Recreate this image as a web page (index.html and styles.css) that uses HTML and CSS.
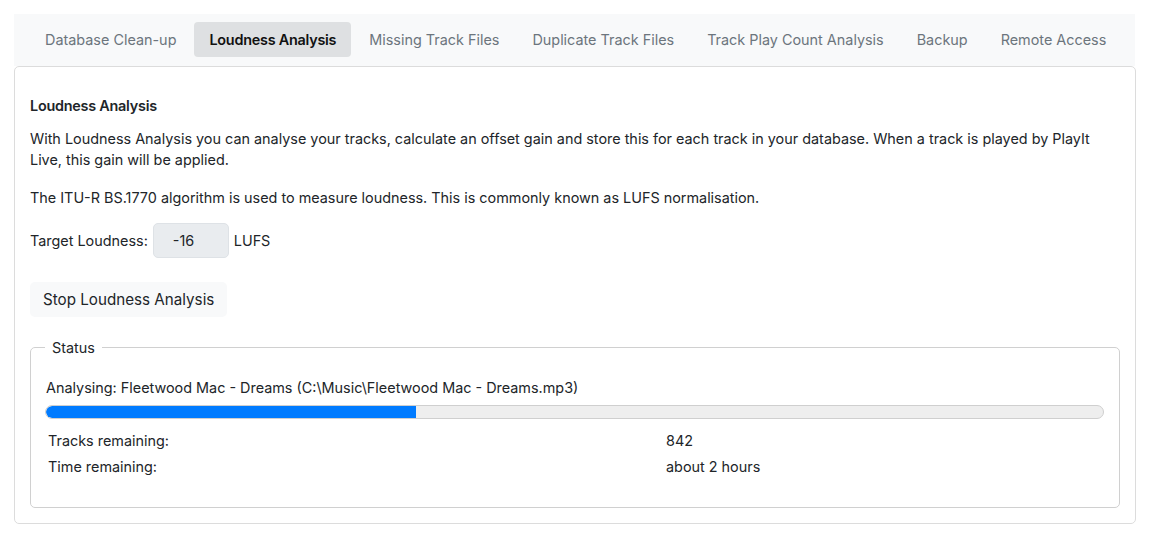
FILE: index.html
```html
<!DOCTYPE html>
<html lang="en">
<head>
<meta charset="utf-8">
<title>Loudness Analysis</title>
<link rel="stylesheet" href="styles.css">
</head>
<body>
<div class="page">
  <nav class="tabs">
    <a class="tab">Database Clean-up</a>
    <a class="tab active">Loudness Analysis</a>
    <a class="tab">Missing Track Files</a>
    <a class="tab">Duplicate Track Files</a>
    <a class="tab">Track Play Count Analysis</a>
    <a class="tab">Backup</a>
    <a class="tab">Remote Access</a>
  </nav>
  <section class="panel">
    <h2 class="title">Loudness Analysis</h2>
    <p class="text">With Loudness Analysis you can analyse your tracks, calculate an offset gain and store this for each track in your database. When a track is played by PlayIt Live, this gain will be applied.</p>
    <p class="text">The ITU-R BS.1770 algorithm is used to measure loudness. This is commonly known as LUFS normalisation.</p>
    <div class="target">
      <span>Target Loudness:</span>
      <input class="num" type="text" value="-16" disabled>
      <span>LUFS</span>
    </div>
    <button class="btn" type="button">Stop Loudness Analysis</button>
    <fieldset class="status">
      <legend class="legend">Status</legend>
      <div class="current">Analysing: Fleetwood Mac - Dreams (C:\Music\Fleetwood Mac - Dreams.mp3)</div>
      <div class="progress"><div class="bar" style="width:35%"></div></div>
      <div class="stats">
        <span>Tracks remaining:</span><span>842</span>
        <span>Time remaining:</span><span>about 2 hours</span>
      </div>
    </fieldset>
  </section>
</div>
</body>
</html>
```

FILE: styles.css
```css
* { box-sizing: border-box; }
html, body { margin: 0; padding: 0; background: #fff; }
body {
  font-family: Inter, "Noto Sans", "Liberation Sans", sans-serif;
  font-size: 14.4px;
  line-height: 21px;
  color: #212529;
}
.page { padding: 14px 14px 0 14px; }
.tabs {
  display: flex;
  gap: 3px;
  background: #f8f9fa;
  padding: 8px 16px 9px 16px;
  margin-right: 1px;
}
.tab {
  padding: 7px 15px;
  color: #6c757d;
  border-radius: 4px;
  white-space: nowrap;
  cursor: pointer;
}
.tab.active {
  background: #dee0e2;
  color: #111;
  font-weight: 600;
  letter-spacing: -0.24px;
}
.panel {
  border: 1px solid #dcdcdc;
  border-radius: 5px;
  padding: 28px 15px 15px 15px;
}
.title {
  margin: 0 0 12px 0;
  font-size: 14.4px;
  line-height: 21px;
  font-weight: 600;
  letter-spacing: -0.24px;
}
.text { margin: 0 0 17px 0; }
.text + .text { margin-bottom: 15px; }
.target {
  display: flex;
  align-items: center;
  gap: 5px;
  margin-bottom: 24px;
}
.num {
  width: 76px;
  height: 35px;
  padding: 0 0 0 19px;
  background: #e9ecef;
  border: 1px solid #dee2e6;
  border-radius: 5px;
  font: inherit;
  color: #212529;
}
.btn {
  display: block;
  height: 35px;
  padding: 0 13px;
  background: #f8f9fa;
  border: none;
  border-radius: 5px;
  font: inherit;
  font-size: 15.2px;
  color: #212529;
  margin-bottom: 20px;
}
.status {
  margin: 0;
  border: 1px solid #d0d0d0;
  border-radius: 5px;
  padding: 19px 15px 30px 14px;
}
.legend {
  padding: 0 7px;
  margin-left: 0;
}
.current { margin-bottom: 7px; padding-left: 1px; }
.progress {
  height: 14px;
  background: #eeeeee;
  border: 1px solid #cfcfcf;
  border-radius: 7px;
  overflow: hidden;
  margin-bottom: 11px;
}
.bar { height: 100%; background: #007bff; border-radius: 7px 0 0 7px; }
.stats {
  display: grid;
  grid-template-columns: 615px 1fr;
  row-gap: 5px;
  padding-left: 3px;
}
.stats span:nth-child(even) { padding-left: 3px; }
```
